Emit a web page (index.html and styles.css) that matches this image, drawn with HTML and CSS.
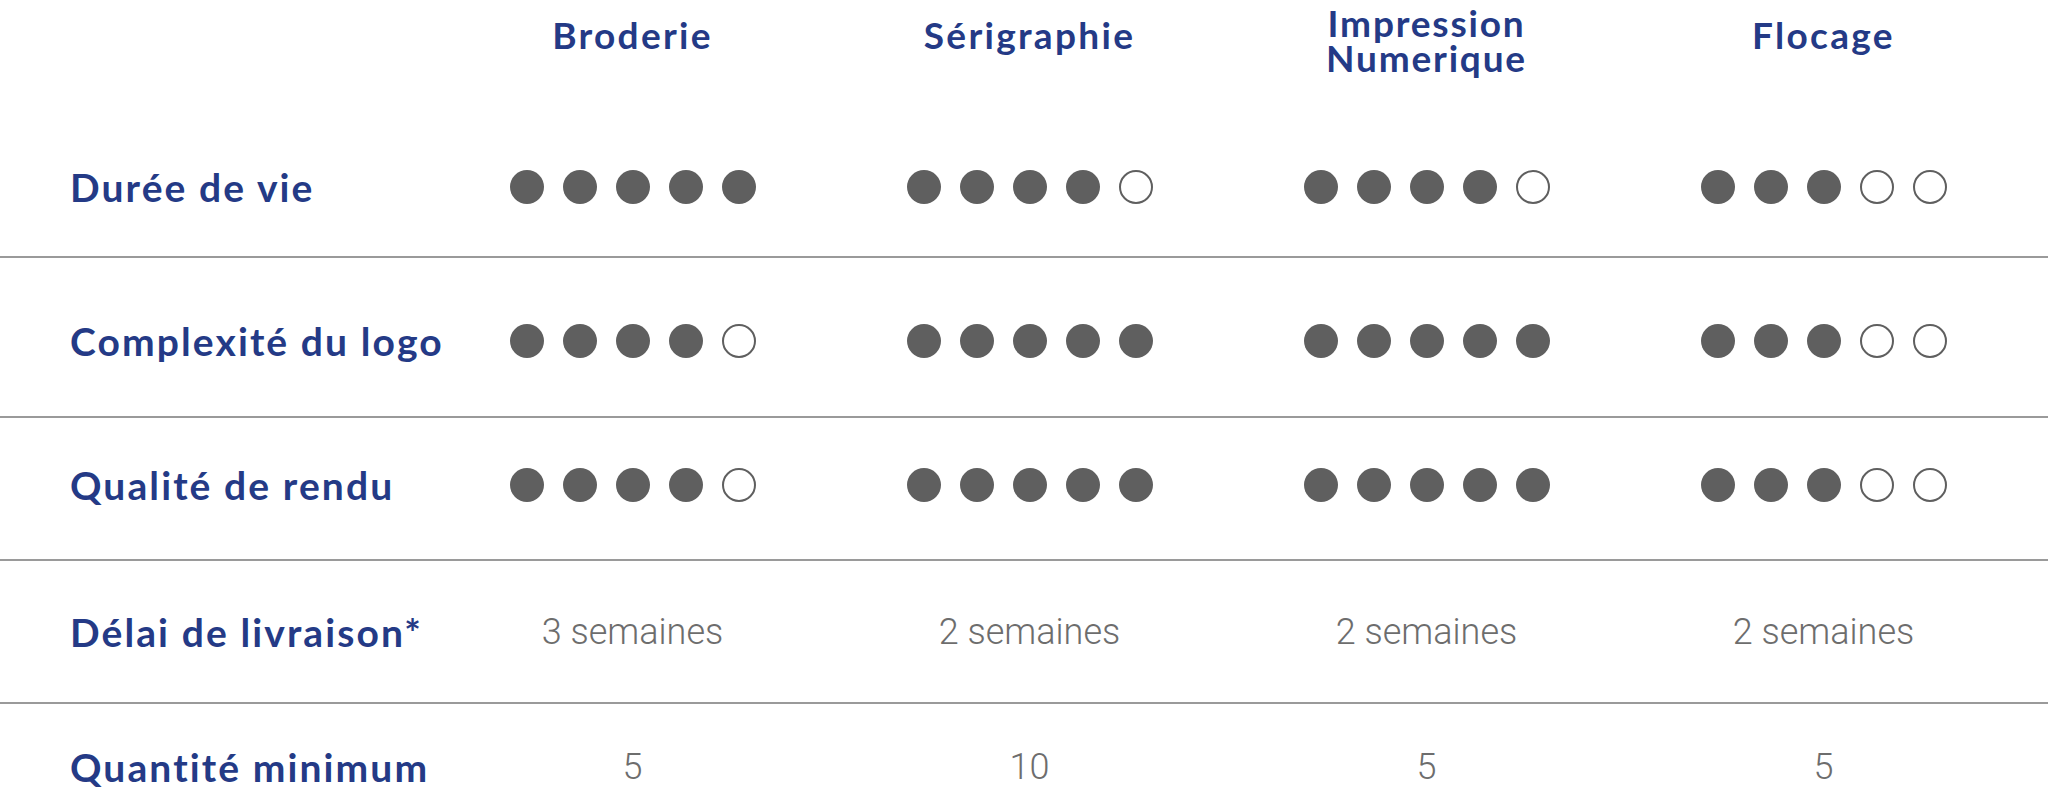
FILE: index.html
```html
<!DOCTYPE html>
<html lang="fr">
<head>
<meta charset="utf-8">
<title>Comparatif des techniques de marquage</title>
<link rel="stylesheet" href="styles.css">
</head>
<body>
<div class="table">
  <div class="row row--head">
    <div class="cell"></div>
    <div class="cell head">Broderie</div>
    <div class="cell head">Sérigraphie</div>
    <div class="cell head head--double">Impression<br>Numerique</div>
    <div class="cell head">Flocage</div>
  </div>

  <div class="row row--1">
    <div class="cell label">Durée de vie</div>
    <div class="cell"><div class="dots"><span class="dot"></span><span class="dot"></span><span class="dot"></span><span class="dot"></span><span class="dot"></span></div></div>
    <div class="cell"><div class="dots"><span class="dot"></span><span class="dot"></span><span class="dot"></span><span class="dot"></span><span class="dot dot--empty"></span></div></div>
    <div class="cell"><div class="dots"><span class="dot"></span><span class="dot"></span><span class="dot"></span><span class="dot"></span><span class="dot dot--empty"></span></div></div>
    <div class="cell"><div class="dots"><span class="dot"></span><span class="dot"></span><span class="dot"></span><span class="dot dot--empty"></span><span class="dot dot--empty"></span></div></div>
  </div>

  <div class="row row--2">
    <div class="cell label">Complexité du logo</div>
    <div class="cell"><div class="dots"><span class="dot"></span><span class="dot"></span><span class="dot"></span><span class="dot"></span><span class="dot dot--empty"></span></div></div>
    <div class="cell"><div class="dots"><span class="dot"></span><span class="dot"></span><span class="dot"></span><span class="dot"></span><span class="dot"></span></div></div>
    <div class="cell"><div class="dots"><span class="dot"></span><span class="dot"></span><span class="dot"></span><span class="dot"></span><span class="dot"></span></div></div>
    <div class="cell"><div class="dots"><span class="dot"></span><span class="dot"></span><span class="dot"></span><span class="dot dot--empty"></span><span class="dot dot--empty"></span></div></div>
  </div>

  <div class="row row--3">
    <div class="cell label">Qualité de rendu</div>
    <div class="cell"><div class="dots"><span class="dot"></span><span class="dot"></span><span class="dot"></span><span class="dot"></span><span class="dot dot--empty"></span></div></div>
    <div class="cell"><div class="dots"><span class="dot"></span><span class="dot"></span><span class="dot"></span><span class="dot"></span><span class="dot"></span></div></div>
    <div class="cell"><div class="dots"><span class="dot"></span><span class="dot"></span><span class="dot"></span><span class="dot"></span><span class="dot"></span></div></div>
    <div class="cell"><div class="dots"><span class="dot"></span><span class="dot"></span><span class="dot"></span><span class="dot dot--empty"></span><span class="dot dot--empty"></span></div></div>
  </div>

  <div class="row row--4">
    <div class="cell label">Délai de livraison*</div>
    <div class="cell value">3 semaines</div>
    <div class="cell value">2 semaines</div>
    <div class="cell value">2 semaines</div>
    <div class="cell value">2 semaines</div>
  </div>

  <div class="row row--5">
    <div class="cell label">Quantité minimum</div>
    <div class="cell value">5</div>
    <div class="cell value">10</div>
    <div class="cell value">5</div>
    <div class="cell value">5</div>
  </div>
</div>
</body>
</html>
```

FILE: styles.css
```css
html, body {
  margin: 0;
  padding: 0;
  background: #ffffff;
}

body {
  font-family: "Lato", "Noto Sans", sans-serif;
  overflow: hidden;
}

.table {
  width: 2048px;
}

.row {
  display: grid;
  grid-template-columns: 434px repeat(4, 397px) 1fr;
  align-items: center;
  box-sizing: border-box;
  border-bottom: 2px solid #9a9a9a;
}

.row--head {
  height: 117px;
  align-items: start;
  border-bottom: none;
}

.row--1 { height: 141px; }
.row--2 { height: 160px; padding-top: 8px; }
.row--3 { height: 143px; padding-bottom: 8px; }
.row--4 { height: 143px; }
.row--5 { height: 126px; border-bottom: none; }

.cell {
  display: flex;
  justify-content: center;
  align-items: center;
}

.head {
  padding-top: 17px;
  text-align: center;
  font-weight: 700;
  font-size: 37px;
  line-height: 35px;
  letter-spacing: 2.3px;
  color: #243a86;
}

.head--double {
  padding-top: 5px;
  letter-spacing: 1.8px;
}

.label {
  justify-content: flex-start;
  padding-left: 70px;
  font-weight: 700;
  font-size: 39px;
  line-height: 44px;
  letter-spacing: 2.1px;
  color: #243a86;
  white-space: nowrap;
}

.value {
  font-family: "Roboto", "Liberation Sans", sans-serif;
  font-weight: 300;
  font-size: 36px;
  line-height: 44px;
  color: #6d6d6d;
}

.dots {
  display: flex;
  gap: 19px;
}

.dot {
  width: 34px;
  height: 34px;
  border-radius: 50%;
  background: #5f5f5f;
  box-sizing: border-box;
}

.dot--empty {
  background: #ffffff;
  border: 2px solid #5f5f5f;
}
```
